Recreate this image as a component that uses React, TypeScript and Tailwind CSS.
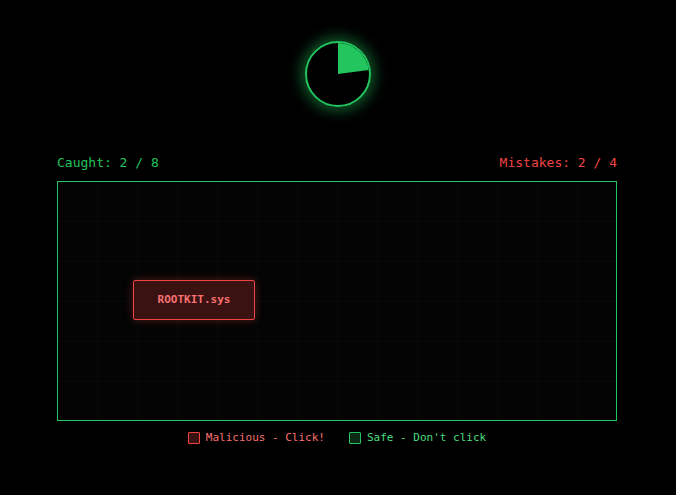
import React from 'react'

const mono = { fontFamily: '"DejaVu Sans Mono", "Liberation Mono", monospace' }

// Round timer drawn as a pie: wedge angle is the elapsed fraction
function Timer({ fraction }: { fraction: number }) {
  const r = 31
  const a = fraction * 2 * Math.PI
  const x = 33 + r * Math.sin(a)
  const y = 33 - r * Math.cos(a)
  const large = fraction > 0.5 ? 1 : 0
  return (
    <div className="w-[66px] h-[66px] rounded-full shadow-[0_0_14px_4px_rgba(34,197,94,0.45)]">
      <svg width="66" height="66" viewBox="0 0 66 66">
        <circle cx="33" cy="33" r="32" fill="#000" />
        <path d={`M33 33 L33 ${33 - r} A${r} ${r} 0 ${large} 1 ${x} ${y} Z`} fill="#22c55e" />
        <circle cx="33" cy="33" r="32" fill="none" stroke="#22c55e" strokeWidth="2" />
      </svg>
    </div>
  )
}

export default function App() {
  return (
    <div className="w-[676px] h-[495px] bg-black overflow-hidden" style={mono}>
      <div className="flex justify-center pt-[41px]">
        <Timer fraction={0.23} />
      </div>

      <div className="w-[560px] ml-[57px] mt-[48px]">
        <div className="flex justify-between text-[13px] leading-[16px] mb-[10px]">
          <span className="text-[#22c55e]">Caught: 2 / 8</span>
          <span className="text-[#ef4444]">Mistakes: 2 / 4</span>
        </div>

        <div
          className="relative h-[240px] border border-[#22c55e] bg-[#040404]"
          style={{
            backgroundImage:
              'linear-gradient(rgba(34,197,94,0.035) 1px, transparent 1px), linear-gradient(90deg, rgba(34,197,94,0.045) 1px, transparent 1px)',
            backgroundSize: '40px 40px',
            backgroundPosition: '-1px -1px',
          }}
        >
          <button className="absolute left-[75px] top-[98px] w-[122px] h-[40px] rounded-[2px] border border-[#ef4444] bg-[#3a1212] text-[#f87171] text-[11px] font-bold shadow-[0_0_8px_rgba(239,68,68,0.35)]">
            ROOTKIT.sys
          </button>
        </div>

        <div className="flex justify-center gap-[24px] mt-[10px] text-[11px] leading-[14px]">
          <div className="flex items-center gap-[6px] text-[#f87171]">
            <span className="w-[12px] h-[12px] rounded-[1px] border border-[#ef4444] bg-[#3a1212]" />
            Malicious - Click!
          </div>
          <div className="flex items-center gap-[6px] text-[#4ade80]">
            <span className="w-[12px] h-[12px] rounded-[1px] border border-[#22c55e] bg-[#0c2a16]" />
            Safe - Don't click
          </div>
        </div>
      </div>
    </div>
  )
}
